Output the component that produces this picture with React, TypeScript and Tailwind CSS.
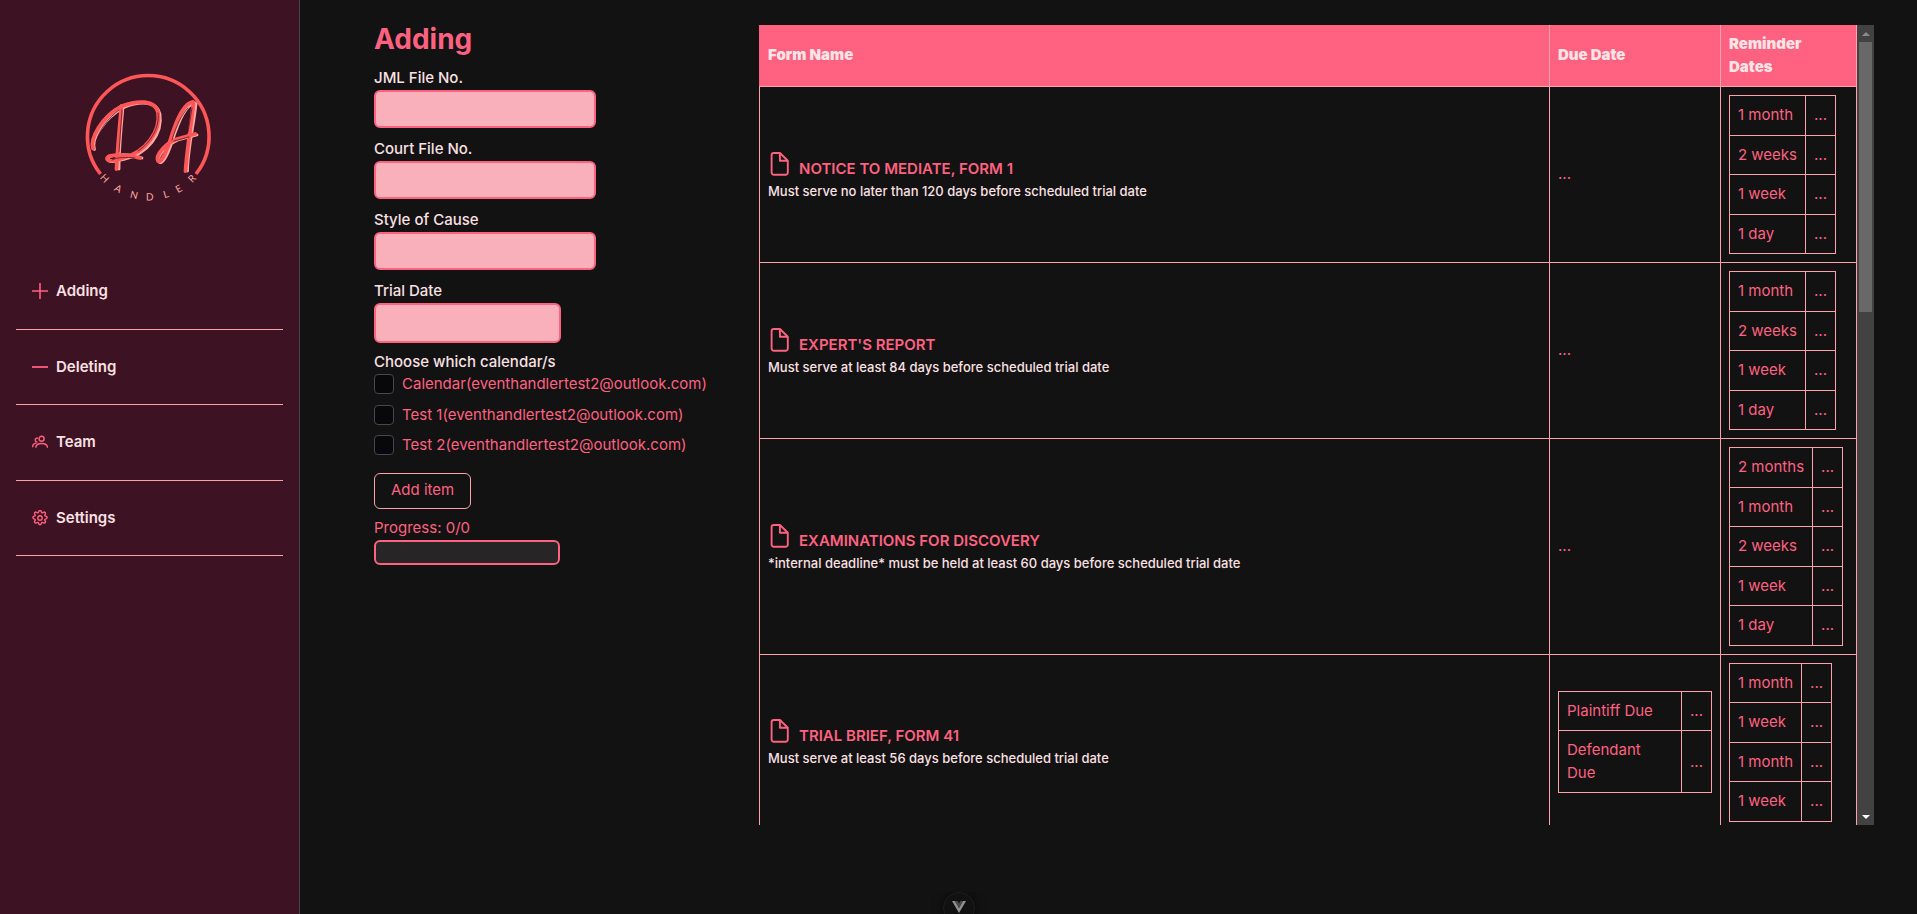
import { useRef } from "react";

const reminders: string[][] = [
  ["1 month", "2 weeks", "1 week", "1 day"],
  ["1 month", "2 weeks", "1 week", "1 day"],
  ["2 months", "1 month", "2 weeks", "1 week", "1 day"],
  ["1 month", "1 week", "1 month", "1 week"],
];

const forms = [
  { name: "NOTICE TO MEDIATE, FORM 1", note: "Must serve no later than 120 days before scheduled trial date" },
  { name: "EXPERT'S REPORT", note: "Must serve at least 84 days before scheduled trial date" },
  { name: "EXAMINATIONS FOR DISCOVERY", note: "*internal deadline* must be held at least 60 days before scheduled trial date" },
  { name: "TRIAL BRIEF, FORM 41", note: "Must serve at least 56 days before scheduled trial date", due: ["Plaintiff Due", "Defendant Due"] },
];

const navItems = [
  { label: "Adding", icon: <path d="M8 0v16M0 8h16" strokeWidth="1.6" /> },
  { label: "Deleting", icon: <path d="M0 8h16" strokeWidth="1.8" /> },
  {
    label: "Team",
    icon: (
      <>
        <circle cx="9.6" cy="4.8" r="2.5" />
        <path d="M3.800 13.800c0-3 2-4.300 5.900-4.300s5.800 1.300 5.800 4.300" />
        <path d="M6 4.300A1.900 1.900 0 1 0 5.600 7.800M.6 13.200c0-2.700 1.200-3.900 3.900-4.100" />
      </>
    ),
  },
  {
    label: "Settings",
    icon: (
      <>
        <circle cx="8" cy="8" r="2.200" />
        <path d="M6.700 1.500C6.900.7 7.300.5 8 .5s1.100.2 1.300 1l.2.700c.2.600.8.800 1.300.500l.7-.4c.7-.4 1.100-.3 1.600.2s.6.900.2 1.600l-.4.700c-.3.500-.1 1.100.5 1.300l.7.200c.8.200 1 .6 1 1.300s-.2 1.100-1 1.300l-.7.200c-.6.200-.8.800-.5 1.300l.4.700c.4.700.3 1.100-.2 1.600s-.9.600-1.600.2l-.7-.4c-.5-.3-1.100-.1-1.300.5l-.2.700c-.2.800-.6 1-1.300 1s-1.100-.2-1.300-1l-.2-.7c-.2-.6-.8-.8-1.300-.5l-.7.400c-.7.400-1.100.3-1.600-.2s-.6-.9-.2-1.600l.4-.7c.3-.5.100-1.100-.5-1.300l-.7-.2c-.8-.2-1-.6-1-1.300s.2-1.100 1-1.300l.7-.2c.6-.2.8-.8.500-1.300l-.4-.7c-.4-.7-.3-1.100.2-1.600s.9-.6 1.600-.2l.7.400c.5.300 1.100.100 1.300-.5z" />
      </>
    ),
  },
];

const ringLetters = [
  { letter: "H", offset: "11.7%" },
  { letter: "A", offset: "25%" },
  { letter: "N", offset: "38.5%" },
  { letter: "D", offset: "51%" },
  { letter: "L", offset: "64%" },
  { letter: "E", offset: "75%" },
  { letter: "R", offset: "88%" },
];

function Logo() {
  return (
    <svg viewBox="0 0 160 150" className="h-[150px] w-[160px]" fill="none" role="img" aria-label="DA Handler">
      <path d="M30.500 114A60.800 60.800 0 1 1 126 114" stroke="#ff5757" strokeWidth="3.600" />
      <g strokeLinecap="round" strokeLinejoin="round">
        <g stroke="#ffa9a3" strokeWidth="2.800">
          <path d="M24.500 89.500C21 80 34 58 54 47.500C70 41 87 41 90 54C93 74 78 94 54 99.500C45 101.500 38 103 38 99.500C38 94 60 93 72 98" />
          <path d="M53 47C51 70 49 88 49 109" />
          <path d="M126 44C124 64 118 88 117.500 111" />
          <path d="M125 43C115 44 107 66 102 82C97 97 92 105 89 102C86 96 97 85 108 80L127 75" />
        </g>
        <g stroke="#ff5757" strokeWidth="3.800">
          <path d="M23 88.500C20 79 31 57 52 46C68 40 85 40 88 52C91 71 76 92 53 98C44 101 38 102 37 99C37 93 57 95 70 98" />
          <path d="M51.500 46C49.500 68 47.500 88 46.500 109" />
          <path d="M123.500 43C121.500 63 117 88 115.500 111" />
          <path d="M123 42C113 43 105 64 100 81C95 95 91 103 88 101C85 95 96 83 107 79L125 74" />
        </g>
        <g stroke="#3d1222" strokeWidth="0.700">
          <path d="M26 82C29 70 38 58 49 50M88 53C90 68 80 83 68 91M52 50L49 92M122 48L118 72M102 80C107 64 112 54 118 48" />
          <path d="M42 100C48 97 56 97 65 98M104 81L119 77" />
        </g>
      </g>
      <defs>
        <path id="logo-arc" d="M22.800 108.200A64.300 64.300 0 0 0 134.200 108.200" />
      </defs>
      {ringLetters.map(({ letter, offset }) => (
        <text key={letter} fill="#ffa9a3" textAnchor="middle" className="font-['Lato'] text-[10px]">
          <textPath href="#logo-arc" startOffset={offset}>{letter}</textPath>
        </text>
      ))}
    </svg>
  );
}

function FileIcon() {
  return (
    <svg viewBox="0 0 24 24" className="size-6 shrink-0" fill="none" stroke="currentColor" strokeWidth="1.900" strokeLinejoin="round" aria-hidden="true">
      <path d="M5.800 1h6.200l7.800 7.700V20.500a2.200 2.200 0 0 1-2.200 2.200H5.800a2.200 2.200 0 0 1-2.200-2.200V3.200A2.200 2.200 0 0 1 5.800 1z" />
      <path d="M11.900 1v7.700h7.900" />
    </svg>
  );
}

function DateTable({ rows, label }: { rows: string[]; label: string }) {
  return (
    <table className="border-collapse" aria-label={label}>
      <tbody>
        {rows.map((row, i) => (
          <tr key={i}>
            <td className="border border-[#ffa1ad] p-2">{row}</td>
            <td className="border border-[#ffa1ad] p-2">...</td>
          </tr>
        ))}
      </tbody>
    </table>
  );
}

function TextField({ id, label }: { id: string; label: string }) {
  return (
    <div className="mb-2.5 flex flex-col items-start">
      <label htmlFor={id} className="h-[23px] font-medium text-[#fbe0e3]">{label}</label>
      <input id={id} type="text" className="h-[38px] w-[222px] rounded-md border-2 border-[#ff6180] bg-[#fab0ba] px-2 text-black" />
    </div>
  );
}

export default function App() {
  const pane = useRef<HTMLDivElement>(null);
  const scroll = (top: number) => pane.current?.scrollBy({ top });
  return (
    <div className="relative flex min-h-screen bg-[#121212] font-['Inter',sans-serif] text-[15px] leading-normal text-[#ff6180]">
      <aside className="flex w-[300px] shrink-0 flex-col border-r border-[#46464a] bg-[#3d1222] px-4">
        <div className="flex pt-[60px] pl-[54px]">
          <Logo />
        </div>
        <nav className="mt-11 flex flex-col">
          {navItems.map((item) => (
            <a key={item.label} href={`#${item.label.toLowerCase()}`} className="flex items-center gap-2 border-b border-[#ffa1ad] px-4 py-[26px] font-semibold text-[#fbe0e3]">
              <svg viewBox="0 0 16 16" className="size-4 text-[#ff6180]" fill="none" stroke="currentColor" strokeWidth="1.400" aria-hidden="true">
                {item.icon}
              </svg>
              {item.label}
            </a>
          ))}
        </nav>
      </aside>

      <main className="flex min-w-0 flex-1 items-start pt-[25px] pr-[43px] pl-[74px]">
        <form className="w-[385px] shrink-0" onSubmit={(e) => e.preventDefault()}>
          <h1 className="mb-3.5 text-[28px] leading-7 font-bold">Adding</h1>
          <TextField id="jml" label="JML File No." />
          <TextField id="court" label="Court File No." />
          <TextField id="style" label="Style of Cause" />
          <div className="mb-2 flex flex-col items-start">
            <label htmlFor="trial" className="h-[23px] font-medium text-[#fbe0e3]">Trial Date</label>
            <input id="trial" type="text" className="h-10 w-[187px] rounded-md border-2 border-[#ff6180] bg-[#fab0ba] px-2 text-black" />
          </div>
          <fieldset>
            <legend className="h-[22px] font-medium text-[#fbe0e3]">Choose which calendar/s</legend>
            <div className="flex flex-col gap-2">
              {["Calendar", "Test 1", "Test 2"].map((name) => (
                <label key={name} className="flex items-center gap-2">
                  <input type="checkbox" className="size-5 appearance-none rounded border border-[#46464d] bg-[#08080b] checked:bg-[#ff6180]" />
                  {name}(eventhandlertest2@outlook.com)
                </label>
              ))}
            </div>
          </fieldset>
          <button type="submit" className="mt-4 h-9 rounded-md border border-[#ffa1ad] px-4">Add item</button>
          <div className="mt-2 flex flex-col items-start">
            <span id="progress-label" className="h-[23px]">Progress: 0/0</span>
            <div role="progressbar" aria-labelledby="progress-label" aria-valuenow={0} className="h-[25px] w-[186px] rounded-md border-2 border-[#ff6180] bg-[#272525]" />
          </div>
        </form>

        <section className="flex h-[800px] min-w-0 flex-1">
          <div ref={pane} className="min-w-0 flex-1 overflow-y-auto [scrollbar-width:none]">
            <table className="w-full table-fixed border-collapse">
              <colgroup>
                <col />
                <col className="w-[171px]" />
                <col className="w-[136px]" />
              </colgroup>
              <thead>
                <tr className="bg-[#ff6180] text-left text-[#ffe4e6]">
                  <th className="border-b border-l border-b-[#ffa1ad] border-l-[#ff6180] p-2 font-black">Form Name</th>
                  <th className="border-x border-b border-[#ffa1ad] p-2 font-black">Due Date</th>
                  <th className="border-x border-b border-[#ffa1ad] p-2 font-black">
                    Reminder
                    <br />
                    Dates
                  </th>
                </tr>
              </thead>
              <tbody>
                {forms.map((form, i) => (
                  <tr key={form.name}>
                    <td className="border border-[#ffa1ad] px-2 pt-3 pb-2">
                      <div className="flex h-[30px] items-start gap-[7px] font-semibold">
                        <FileIcon />
                        <span className="pt-1.5">{form.name}</span>
                      </div>
                      <p className="text-[13px] font-medium text-[#fbe0e3]">{form.note}</p>
                    </td>
                    <td className="border border-[#ffa1ad] p-2">
                      {form.due ? <DateTable rows={form.due} label="Due dates" /> : "..."}
                    </td>
                    <td className="border border-[#ffa1ad] p-2">
                      <DateTable rows={reminders[i]} label="Reminder dates" />
                    </td>
                  </tr>
                ))}
              </tbody>
            </table>
          </div>
          <div className="flex w-[17px] shrink-0 flex-col bg-[#424242]">
            <button type="button" aria-label="Scroll up" onClick={() => scroll(-40)} className="flex h-[17px] items-center justify-center">
              <svg viewBox="0 0 8 4" className="h-1 w-2" fill="#8b8b8b"><path d="M4 0L8 4H0z" /></svg>
            </button>
            <div className="flex-1 px-0.5"><div className="h-[270px] bg-[#686868]" /></div>
            <button type="button" aria-label="Scroll down" onClick={() => scroll(40)} className="flex h-[17px] items-center justify-center">
              <svg viewBox="0 0 8 4" className="h-1 w-2" fill="#fff"><path d="M0 0H8L4 4z" /></svg>
            </button>
          </div>
        </section>
      </main>

      <div className="absolute inset-x-0 bottom-0 flex h-[22px] justify-center overflow-hidden">
        <button type="button" aria-label="Open developer tools" className="flex h-8 w-8 items-start justify-center rounded-full border border-[#1e1e1e] bg-[#111] pt-2 shadow-[0_0_12px_#0008]">
          <svg viewBox="0 0 14 12" className="h-3 w-3.5">
            <path d="M0 0h3l4 7 4-7h3L7 12z" fill="#8f8f8f" />
            <path d="M3 0h2.500L7 2.500 8.500 0H11L7 7z" fill="#4b4b4b" />
          </svg>
        </button>
      </div>
    </div>
  );
}
